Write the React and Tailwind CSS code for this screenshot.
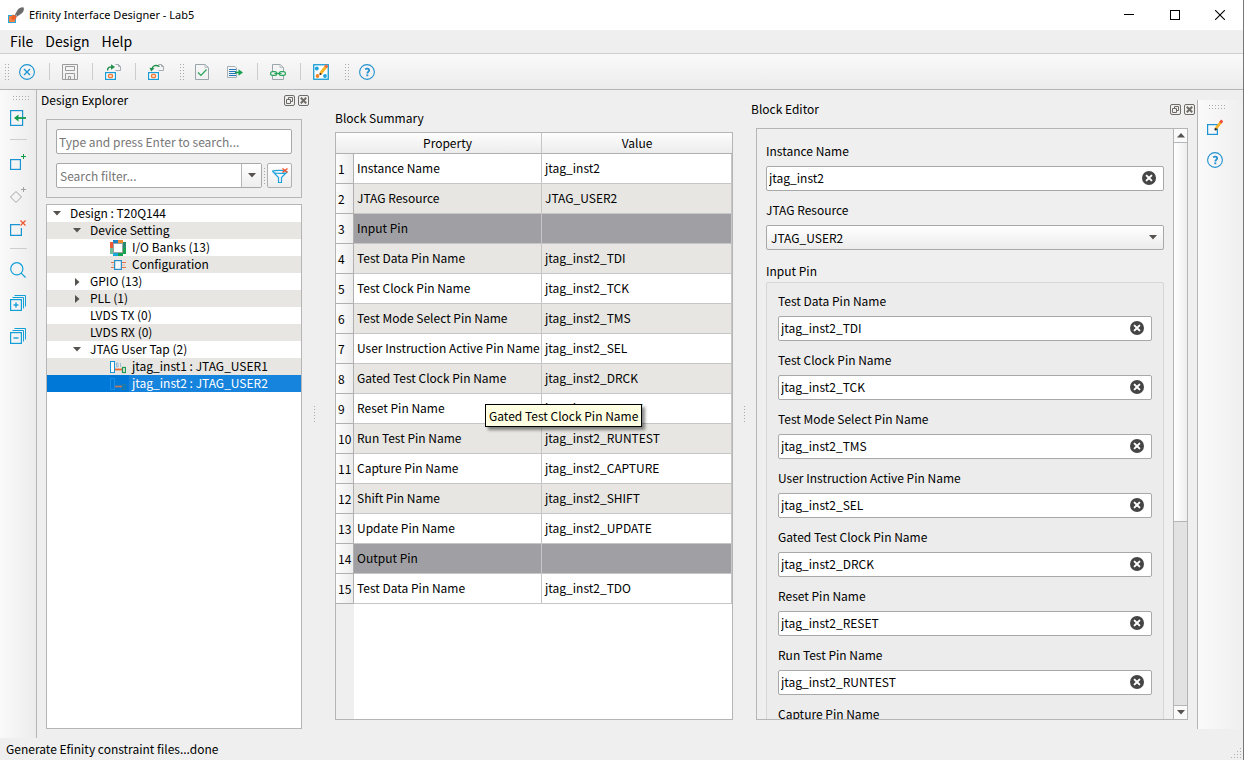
import React from 'react';

const TOOL_BLUE = '#139fd7';

/* ---------- icons ---------- */

function AppLogo() {
  return (
    <svg width="16" height="16" viewBox="0 0 16 16" aria-hidden="true">
      <path d="M5.500 10.500 L9.500 3 C11 0.800 14 0 15.500 0.500 C16.500 2 15.500 5 13.500 6.500 L7 11 Z" fill="#6b6b6b" />
      <path d="M6 9 L9 7.500 L8.500 10.500 L6.500 11.500 Z" fill="#b9c3c8" />
      <rect x="0.500" y="8.500" width="7" height="7" fill="#f58345" stroke="#2aa7dc" strokeWidth="1" />
      <path d="M2.500 10.500 L5 7.500 L8.500 9 L8 12 L5 13.500 Z" fill="#f0622b" />
    </svg>
  );
}

function CloseCircleIcon() {
  return (
    <svg width="16" height="16" viewBox="0 0 16 16" fill="none" stroke="#1a94d2" aria-hidden="true">
      <circle cx="8" cy="8" r="7.400" strokeWidth="1.100" />
      <path d="M5 5 L11 11 M11 5 L5 11" strokeWidth="1.300" />
    </svg>
  );
}

function SaveIcon() {
  return (
    <svg width="16" height="16" viewBox="0 0 16 16" fill="none" stroke="#9b9b9b" aria-hidden="true">
      <path d="M0.500 0.500 H15.500 V15.500 H0.500 Z M3.500 2.500 H12.500 V6.500 H3.500 Z M3.500 15 V9.500 H12.500 V15 M6.500 15 V12.500 H8.500 V15" />
    </svg>
  );
}

function GenerateIcon({ reverse = false }) {
  return (
    <svg width="16" height="16" viewBox="0 0 16 16" fill="none" aria-hidden="true">
      <path d="M10.500 0.500 H13.500 L15.500 2.500 V6.500 H10.500" stroke="#a4acb2" />
      <path d="M13.500 0.500 V2.500 H15.500" stroke="#a4acb2" />
      <rect x="0.600" y="8.600" width="9.800" height="6.800" stroke="#1a9bd6" strokeWidth="1.200" fill="#ffffff" />
      <rect x="3.500" y="10.500" width="4" height="3" rx="1" stroke="#ef7c3b" strokeWidth="1.500" />
      {reverse ? (
        <>
          <path d="M4 5 C4.500 1.500 8 0.500 11.500 2.500" stroke="#1f8f4a" strokeWidth="1.400" />
          <path d="M1.500 3.800 L6.500 4.300 L3.200 7.600 Z" fill="#1f8f4a" />
        </>
      ) : (
        <>
          <path d="M2.500 6.500 C2.500 3.500 4.500 2.500 8 3" stroke="#1f8f4a" strokeWidth="1.400" />
          <path d="M6 0.200 L10 3 L6 5.800 Z" fill="#1f8f4a" />
        </>
      )}
    </svg>
  );
}

function CheckDocIcon() {
  return (
    <svg width="16" height="16" viewBox="0 0 16 16" fill="none" aria-hidden="true">
      <path d="M1.500 0.500 H11 L14.500 3.500 V15.500 H1.500 Z" stroke="#9aa5ab" />
      <path d="M11 0.500 V3.500 H14.500" stroke="#b9c1c5" />
      <path d="M4 8.500 L7 11.500 L12.500 5.500" stroke="#27a55a" strokeWidth="1.200" />
    </svg>
  );
}

function ExportListIcon() {
  return (
    <svg width="16" height="16" viewBox="0 0 16 16" fill="none" aria-hidden="true">
      <path d="M0.500 2.500 H8 L9.500 4 V13.500 H0.500 Z" stroke="#a9b0b5" />
      <path d="M2 5.500 H9 M2 7.500 H9 M2 9.500 H9 M2 11.500 H9" stroke="#2478b8" />
      <path d="M8 8.500 H13" stroke="#18a34e" strokeWidth="1.600" />
      <path d="M11.500 5.300 L16 8.500 L11.500 11.700 Z" fill="#18a34e" />
    </svg>
  );
}

function LinkDocIcon() {
  return (
    <svg width="16" height="16" viewBox="0 0 16 16" fill="none" aria-hidden="true">
      <path d="M2.500 7 V0.500 H10 L13.500 3.500 V7 M2.500 12 V15.500 H13.500 V12" stroke="#9aa5ab" />
      <path d="M10 0.500 V3.500 H13.500" stroke="#b9c1c5" />
      <rect x="0.600" y="7.600" width="6.200" height="3.800" rx="1.900" stroke="#27a55a" strokeWidth="1.200" />
      <rect x="9.200" y="7.600" width="6.200" height="3.800" rx="1.900" stroke="#27a55a" strokeWidth="1.200" />
      <path d="M4.500 9.500 H11.500" stroke="#27a55a" strokeWidth="1.200" />
    </svg>
  );
}

function FloorplanIcon() {
  return (
    <svg width="16" height="16" viewBox="0 0 16 16" fill="none" aria-hidden="true">
      <rect x="0.750" y="0.750" width="14.500" height="14.500" stroke="#159ad3" strokeWidth="1.300" fill="#ffffff" />
      <circle cx="3.800" cy="4.500" r="1.900" fill="#1aa3dc" />
      <circle cx="4.500" cy="12" r="1.900" fill="#f0852b" />
      <circle cx="12" cy="12" r="1.900" fill="#1aa3dc" />
      <path d="M7.500 9.500 L13.500 2" stroke="#fbb324" strokeWidth="3" />
      <path d="M12.500 3.200 L14.200 1.200" stroke="#f06a45" strokeWidth="3" />
      <circle cx="7.400" cy="10" r="1.100" fill="#3b2c1d" />
    </svg>
  );
}

function HelpIcon() {
  return (
    <svg width="16" height="16" viewBox="0 0 16 16" fill="none" stroke="#2291d0" aria-hidden="true">
      <circle cx="8" cy="8" r="7.400" strokeWidth="1.100" />
      <path d="M6.200 5.400 C7.500 4.200 10.200 4.300 10.200 6.200 C10.200 7.700 8.300 7.700 8.300 9.400" strokeWidth="1.800" />
      <path d="M8.300 10.400 V12.200" strokeWidth="1.900" />
    </svg>
  );
}

function ImportBlockIcon() {
  return (
    <svg width="16" height="16" viewBox="0 0 16 16" fill="none" aria-hidden="true">
      <rect x="0.600" y="0.600" width="12" height="14.800" stroke="#1a94d2" strokeWidth="1.200" />
      <path d="M7 8 H16" stroke="#129a4b" strokeWidth="1.800" />
      <path d="M4 8 L8.500 4.600 V11.400 Z" fill="#129a4b" />
    </svg>
  );
}

function AddBlockIcon() {
  return (
    <svg width="16" height="16" viewBox="0 0 16 16" fill="none" aria-hidden="true">
      <rect x="0.600" y="5.600" width="9.800" height="9.800" stroke="#1a94d2" strokeWidth="1.200" />
      <path d="M11 2.500 H16 M13.500 0 V5" stroke="#129a4b" />
    </svg>
  );
}

function AddDiamondIcon() {
  return (
    <svg width="16" height="16" viewBox="0 0 16 16" fill="none" stroke="#a3a3a3" aria-hidden="true">
      <path d="M6 4.500 L11.500 10 L6 15.500 L0.500 10 Z" />
      <path d="M11 2.500 H16 M13.500 0 V5" />
    </svg>
  );
}

function DeleteBlockIcon() {
  return (
    <svg width="16" height="16" viewBox="0 0 16 16" fill="none" aria-hidden="true">
      <path d="M11.400 8 V15.400 H0.600 V4.600 H10" stroke="#1a94d2" strokeWidth="1.200" />
      <path d="M10.500 0.500 L15.500 5.500 M15.500 0.500 L10.500 5.500" stroke="#f0562e" strokeWidth="1.200" />
    </svg>
  );
}

function SearchIcon() {
  return (
    <svg width="16" height="16" viewBox="0 0 16 16" fill="none" stroke={TOOL_BLUE} strokeWidth="1.200" aria-hidden="true">
      <circle cx="6.800" cy="6.800" r="6.100" />
      <path d="M11.200 11.200 L15.500 15.500" />
    </svg>
  );
}

function StackIcon({ plus = false }) {
  return (
    <svg width="16" height="16" viewBox="0 0 16 16" fill="none" stroke={TOOL_BLUE} aria-hidden="true">
      <path d="M4.500 0.500 H15.500 V11.500 M2.500 2.500 H13.500 V13.500" />
      <rect x="0.600" y="4.600" width="10.800" height="10.800" strokeWidth="1.200" />
      <path d="M3.500 10 H8.500" strokeWidth="1.400" />
      {plus && <path d="M6 7.500 V12.500" strokeWidth="1.400" />}
    </svg>
  );
}

function EditBlockIcon() {
  return (
    <svg width="16" height="16" viewBox="0 0 16 16" fill="none" aria-hidden="true">
      <rect x="0.600" y="5.600" width="9.800" height="9.800" stroke="#1a94d2" strokeWidth="1.200" />
      <path d="M9 9.500 L14 3" stroke="#fbb324" strokeWidth="2.800" />
      <path d="M13.300 3.900 L15.200 1.400" stroke="#ee4f3c" strokeWidth="2.800" />
      <circle cx="8.700" cy="10.300" r="1.200" fill="#2d2a26" />
    </svg>
  );
}

function ClearFilterIcon() {
  return (
    <svg width="16" height="16" viewBox="0 0 16 16" fill="none" aria-hidden="true">
      <path d="M0.800 3.500 C0.800 1.800 15 1.800 15 4 C15 6 0.800 6 0.800 3.500 L6.500 9.500 V14.500 H9.500 V9.500 L15 4" stroke="#20a4dc" strokeWidth="1.200" />
      <path d="M10.500 0.500 L15.500 4.500 M15.500 0.500 L10.500 4.500" stroke="#f0562e" strokeWidth="1.400" />
    </svg>
  );
}

function RestoreIcon() {
  return (
    <svg width="11" height="11" viewBox="0 0 11 11" fill="none" stroke="#6f6b66" aria-hidden="true">
      <rect x="0.500" y="0.500" width="10" height="10" rx="1.500" />
      <path d="M4.500 5 V2.500 H8.500 V6.500 H6.500 M2.500 4.500 H6.500 V8.500 H2.500 Z" />
    </svg>
  );
}

function CloseBoxIcon() {
  return (
    <svg width="11" height="11" viewBox="0 0 11 11" fill="none" stroke="#6f6b66" aria-hidden="true">
      <rect x="0.500" y="0.500" width="10" height="10" rx="1.500" />
      <path d="M2.800 2.800 L8.200 8.200 M8.200 2.800 L2.800 8.200" strokeWidth="2" />
    </svg>
  );
}

function ClearTextIcon() {
  return (
    <svg width="14" height="14" viewBox="0 0 14 14" aria-hidden="true">
      <circle cx="7" cy="7" r="7" fill="#454545" />
      <path d="M4.600 4.600 L9.400 9.400 M9.400 4.600 L4.600 9.400" stroke="#ffffff" strokeWidth="2" strokeLinecap="round" />
    </svg>
  );
}

function IoBanksIcon() {
  return (
    <svg width="16" height="16" viewBox="0 0 16 16" aria-hidden="true">
      <path d="M3 0 H8 V3 H3 Z" fill="#1d82c6" />
      <path d="M8 0 H13 V3 H8 Z" fill="#f28a2e" />
      <path d="M0 2 H3 V8 H0 Z" fill="#ee5a35" />
      <path d="M0 8 H3 V14 H0 Z" fill="#6fbf96" />
      <path d="M13 2 H16 V8 H13 Z" fill="#2b8a70" />
      <path d="M13 8 H16 V14 H13 Z" fill="#17a24b" />
      <path d="M3 13 H8 V16 H3 Z" fill="#17a9d9" />
      <path d="M8 13 H13 V16 H8 Z" fill="#15a24f" />
      <rect x="3.500" y="3.500" width="9" height="9" fill="#ffffff" stroke="#9aa0a4" />
    </svg>
  );
}

function ConfigurationIcon() {
  return (
    <svg width="16" height="16" viewBox="0 0 16 16" fill="none" aria-hidden="true">
      <path d="M1 5.500 H4 M12 5.500 H16 M1 10.500 H4 M12 10.500 H16" stroke="#ec6f45" strokeWidth="1.200" />
      <path d="M2 8 H4 M12 8 H15" stroke="#f3b598" />
      <rect x="4.600" y="3.600" width="6.800" height="8.800" stroke="#2d8fc8" strokeWidth="1.200" fill="#f6f9fb" />
    </svg>
  );
}

function JtagIcon({ selected = false }) {
  return (
    <svg width="16" height="16" viewBox="0 0 16 16" fill="none" aria-hidden="true">
      <rect x="0.500" y="2.500" width="4" height="11" stroke={selected ? '#1b8be0' : '#1a94d2'} fill={selected ? 'none' : '#ffffff'} />
      {!selected && <path d="M6.500 4 V8 H8 V4 Z M10.500 4 V8" stroke="#8fb9d4" strokeWidth="0.900" />}
      <path d="M5 10.500 H12" stroke={selected ? '#b87a5c' : '#ee6a35'} strokeWidth="1.800" />
      <rect x="12.500" y="8.500" width="3" height="5" stroke={selected ? '#1f7ba0' : '#1f9a54'} strokeWidth="1.200" />
    </svg>
  );
}

function Arrow({ dir = 'down', className = '' }) {
  const d = { down: 'M0 0 H8 L4 4.500 Z', up: 'M0 4.500 H8 L4 0 Z' }[dir];
  return (
    <svg width="8" height="5" viewBox="0 0 8 5" className={className} aria-hidden="true">
      <path d={d} fill="#55524f" />
    </svg>
  );
}

/* ---------- window chrome ---------- */

function TitleBar() {
  return (
    <header className="flex h-[30px] shrink-0 items-center bg-white pl-2">
      <AppLogo />
      <h1 className="ml-[5px] flex-1 font-['Noto_Sans',sans-serif] text-[11px]">Efinity Interface Designer - Lab5</h1>
      <button aria-label="Minimize" className="flex h-full w-[46px] items-center justify-center">
        <svg width="10" height="10" viewBox="0 0 10 10"><path d="M0 4.500 H10" stroke="#000" /></svg>
      </button>
      <button aria-label="Maximize" className="flex h-full w-[45px] items-center justify-center">
        <svg width="10" height="10" viewBox="0 0 10 10"><rect x="0.500" y="0.500" width="9" height="9" fill="none" stroke="#000" /></svg>
      </button>
      <button aria-label="Close" className="flex h-full w-[46px] items-center justify-center">
        <svg width="10" height="10" viewBox="0 0 10 10"><path d="M0 0 L10 10 M10 0 L0 10" stroke="#000" strokeWidth="1.100" /></svg>
      </button>
    </header>
  );
}

function MenuBar() {
  return (
    <nav className="flex h-6 shrink-0 items-center gap-3 border-b border-[#cfcfcf] pb-px pl-[10px] text-sm">
      <button>File</button>
      <button>Design</button>
      <button>Help</button>
    </nav>
  );
}

const dots = 'bg-[radial-gradient(circle,#a9a9a9_35%,transparent_45%)] bg-[length:3px_3px]';

function VerticalGrip({ className }) {
  return (
    <div className={className}>
      <div className={`h-[18px] w-[6px] ${dots}`} />
    </div>
  );
}

function TopButton({ label, children }) {
  return (
    <button aria-label={label} className="flex h-full w-[33px] items-center pl-[9px]">
      {children}
    </button>
  );
}

function TopSeparator() {
  return <div className="ml-[6px] mr-[3px] h-[17px] w-px bg-[#cdcdcd]" />;
}

function TopToolbar() {
  return (
    <div role="toolbar" className="flex h-9 shrink-0 items-center border-b border-[#b5b5b5] bg-linear-to-b from-[#fafafa] to-[#ececec]">
      <VerticalGrip className="w-[10px] pl-1" />
      <TopButton label="Close design"><CloseCircleIcon /></TopButton>
      <TopSeparator />
      <TopButton label="Save"><SaveIcon /></TopButton>
      <TopSeparator />
      <TopButton label="Import design"><GenerateIcon /></TopButton>
      <TopSeparator />
      <TopButton label="Export design"><GenerateIcon reverse /></TopButton>
      <VerticalGrip className="w-[13px] pl-[7px]" />
      <TopButton label="Check design"><CheckDocIcon /></TopButton>
      <TopButton label="Generate constraints"><ExportListIcon /></TopButton>
      <TopSeparator />
      <TopButton label="View report"><LinkDocIcon /></TopButton>
      <TopSeparator />
      <TopButton label="Resource assigner"><FloorplanIcon /></TopButton>
      <VerticalGrip className="w-[13px] pl-[7px]" />
      <TopButton label="Help"><HelpIcon /></TopButton>
    </div>
  );
}

function SideButton({ label, children }) {
  return (
    <button aria-label={label} className="flex h-[33px] items-center">
      {children}
    </button>
  );
}

function LeftToolbar() {
  return (
    <div role="toolbar" className="flex w-[37px] shrink-0 flex-col border-r border-[#b5b5b5] bg-linear-to-r from-[#fafafa] to-[#ececec] pl-[10px]">
      <div className={`ml-[2px] mt-[5px] h-[6px] w-[18px] shrink-0 ${dots}`} />
      <SideButton label="Import block"><ImportBlockIcon /></SideButton>
      <div className="my-[5px] h-px w-[17px] bg-[#cdcdcd]" />
      <SideButton label="Add block"><AddBlockIcon /></SideButton>
      <SideButton label="Add instance"><AddDiamondIcon /></SideButton>
      <SideButton label="Delete block"><DeleteBlockIcon /></SideButton>
      <div className="my-[4px] h-px w-[17px] bg-[#cdcdcd]" />
      <SideButton label="Find"><SearchIcon /></SideButton>
      <SideButton label="Expand all"><StackIcon plus /></SideButton>
      <SideButton label="Collapse all"><StackIcon /></SideButton>
    </div>
  );
}

function RightToolbar() {
  return (
    <div role="toolbar" className="mb-[9px] mt-[10px] flex w-[46px] shrink-0 flex-col border-l border-[#b5b5b5] bg-linear-to-r from-[#fafafa] to-[#efefef] pl-[9px]">
      <div className={`ml-[1px] mt-[4px] h-[6px] w-[18px] shrink-0 ${dots}`} />
      <SideButton label="Edit block"><EditBlockIcon /></SideButton>
      <SideButton label="Help"><HelpIcon /></SideButton>
    </div>
  );
}

function DockHeader({ title }) {
  return (
    <div className="flex h-5 shrink-0 items-center gap-[3px]">
      <h2 className="flex-1">{title}</h2>
      <button aria-label={`Float ${title}`}><RestoreIcon /></button>
      <button aria-label={`Close ${title}`}><CloseBoxIcon /></button>
    </div>
  );
}

function Splitter() {
  return (
    <div className="flex w-[11px] shrink-0 items-center justify-center">
      <div className={`h-[18px] w-[3px] ${dots}`} />
    </div>
  );
}

/* ---------- design explorer ---------- */

const TREE = [
  { level: 0, label: 'Design : T20Q144', open: true },
  { level: 1, label: 'Device Setting', open: true },
  { level: 2, label: 'I/O Banks (13)', icon: <IoBanksIcon /> },
  { level: 2, label: 'Configuration', icon: <ConfigurationIcon /> },
  { level: 1, label: 'GPIO (13)', open: false },
  { level: 1, label: 'PLL (1)', open: false },
  { level: 1, label: 'LVDS TX (0)' },
  { level: 1, label: 'LVDS RX (0)' },
  { level: 1, label: 'JTAG User Tap (2)', open: true },
  { level: 2, label: 'jtag_inst1 : JTAG_USER1', icon: <JtagIcon /> },
  { level: 2, label: 'jtag_inst2 : JTAG_USER2', icon: <JtagIcon selected />, selected: true },
];

const INDENT = ['pl-[6px]', 'pl-[26px]', 'pl-[46px]'];

function TreeRow({ item, index }) {
  const bg = item.selected ? 'bg-[#0078d7] text-white' : index % 2 ? 'bg-[#e7e6e2]' : 'bg-white';
  return (
    <li
      role="treeitem"
      aria-level={item.level + 1}
      aria-expanded={item.open}
      aria-selected={!!item.selected}
      className={`flex h-[17px] items-center ${INDENT[item.level]} ${bg}`}
    >
      <span className="flex w-[17px] shrink-0">
        {item.open === true && <Arrow />}
        {item.open === false && (
          <svg width="5" height="8" viewBox="0 0 5 8" className="ml-[2px]" aria-hidden="true">
            <path d="M0 0 V8 L4.500 4 Z" fill="#55524f" />
          </svg>
        )}
      </span>
      {item.icon && <span className="mr-[3px] shrink-0">{item.icon}</span>}
      <span
        className={`flex h-full flex-1 items-center whitespace-nowrap pb-[2px] ${item.icon ? 'pl-[3px]' : ''} ${item.selected ? 'bg-[#1683dd]' : ''}`}
      >
        {item.label}
      </span>
    </li>
  );
}

function DesignExplorer() {
  return (
    <section className="flex w-[272px] shrink-0 flex-col pb-[9px] pl-1">
      <DockHeader title="Design Explorer" />
      <div className="ml-[5px] mr-[7px] mt-[9px] flex flex-col gap-[9px] border border-[#b5b5b5] p-[9px]">
        <input
          type="text"
          aria-label="Search"
          placeholder="Type and press Enter to search..."
          className="h-[25px] w-full rounded-[2px] border border-[#a8a8a8] bg-white px-[2px] outline-none placeholder:text-[#777777]"
        />
        <div className="flex items-center">
          <div className="flex h-[25px] min-w-0 flex-1 rounded-[2px] border border-[#a8a8a8] bg-white">
            <input
              type="text"
              aria-label="Search filter"
              placeholder="Search filter..."
              className="min-w-0 flex-1 bg-transparent px-[3px] outline-none placeholder:text-[#777777]"
            />
            <button aria-label="Show filters" className="flex w-5 items-center justify-center border-l border-[#b5b5b5] bg-linear-to-b from-white to-[#eeeeee]">
              <Arrow />
            </button>
          </div>
          <div className={`mx-px h-[18px] w-[3px] ${dots}`} />
          <button aria-label="Clear filter" className="flex size-[25px] items-center justify-center rounded-[2px] border border-[#b0b0b0] bg-linear-to-b from-white to-[#eeeeee]">
            <ClearFilterIcon />
          </button>
        </div>
      </div>
      <ul role="tree" aria-label="Design" className="ml-[5px] mr-[7px] mt-[6px] min-h-0 flex-1 overflow-hidden border border-[#b5b5b5] bg-white">
        {TREE.map((item, i) => (
          <TreeRow key={item.label} item={item} index={i} />
        ))}
      </ul>
    </section>
  );
}

/* ---------- block summary ---------- */

const ROWS = [
  ['Instance Name', 'jtag_inst2'],
  ['JTAG Resource', 'JTAG_USER2'],
  ['Input Pin'],
  ['Test Data Pin Name', 'jtag_inst2_TDI'],
  ['Test Clock Pin Name', 'jtag_inst2_TCK'],
  ['Test Mode Select Pin Name', 'jtag_inst2_TMS'],
  ['User Instruction Active Pin Name', 'jtag_inst2_SEL'],
  ['Gated Test Clock Pin Name', 'jtag_inst2_DRCK', true],
  ['Reset Pin Name', 'jtag_inst2_RESET'],
  ['Run Test Pin Name', 'jtag_inst2_RUNTEST'],
  ['Capture Pin Name', 'jtag_inst2_CAPTURE'],
  ['Shift Pin Name', 'jtag_inst2_SHIFT'],
  ['Update Pin Name', 'jtag_inst2_UPDATE'],
  ['Output Pin'],
  ['Test Data Pin Name', 'jtag_inst2_TDO'],
];

function BlockSummary() {
  const cell = 'border-b border-r border-[#c6c6c6] px-[3px] pb-[2px] text-left font-normal';
  const head = 'border-b border-[#b0b0b0] bg-linear-to-b from-[#fdfdfd] to-[#ececec] font-normal';
  return (
    <section className="flex min-w-0 flex-1 flex-col pb-[18px] pl-[15px] pr-[6px]">
      <h2 className="mt-[18px] h-[24px] leading-[19px]">Block Summary</h2>
      <div className="flex min-h-0 flex-1 flex-col border border-[#b5b5b5] bg-white">
        <table className="w-full table-fixed border-separate border-spacing-0 whitespace-nowrap">
          <colgroup>
            <col className="w-[18px]" />
            <col className="w-[188px]" />
            <col />
          </colgroup>
          <thead>
            <tr className="h-[21px]">
              <td className={head} />
              <th className={`${head} border-r border-r-[#c6c6c6]`}>Property</th>
              <th className={head}>Value</th>
            </tr>
          </thead>
          <tbody>
            {ROWS.map(([name, value, hovered], i) => {
              const bg = !value ? 'bg-[#a0a0a4]' : i % 2 ? 'bg-[#e7e6e2]' : 'bg-white';
              return (
                <tr key={i} className="h-[30px]">
                  <th scope="row" className="border-b border-r border-[#b0b0b0] bg-linear-to-r from-[#fdfdfd] to-[#ececec] p-0 pl-[2px] text-left font-normal">
                    {i + 1}
                  </th>
                  <td className={`${cell} ${bg} ${hovered ? 'relative' : ''}`}>
                    {name}
                    {hovered && (
                      <div role="tooltip" className="absolute left-[131px] top-[40px] z-10 border border-black bg-[#ffffe1] px-[3px] leading-[21px] shadow-[3px_3px_3px_rgba(0,0,0,0.45)]">
                        {name}
                      </div>
                    )}
                  </td>
                  <td className={`${cell} ${bg}`}>{value}</td>
                </tr>
              );
            })}
          </tbody>
        </table>
        <div className="w-[18px] flex-1 bg-[#efefef]" />
      </div>
    </section>
  );
}

/* ---------- block editor ---------- */

const PINS = [
  ['Test Data Pin Name', 'jtag_inst2_TDI'],
  ['Test Clock Pin Name', 'jtag_inst2_TCK'],
  ['Test Mode Select Pin Name', 'jtag_inst2_TMS'],
  ['User Instruction Active Pin Name', 'jtag_inst2_SEL'],
  ['Gated Test Clock Pin Name', 'jtag_inst2_DRCK'],
  ['Reset Pin Name', 'jtag_inst2_RESET'],
  ['Run Test Pin Name', 'jtag_inst2_RUNTEST'],
  ['Capture Pin Name', 'jtag_inst2_CAPTURE'],
];

function TextField({ id, label, value }) {
  return (
    <div className="mb-[10px] flex flex-col gap-[6px]">
      <label htmlFor={id} className="leading-[18px]">{label}</label>
      <div className="flex h-[25px] items-center rounded-[2px] border border-[#a8a8a8] bg-white pb-px pr-[7px]">
        <input id={id} type="text" defaultValue={value} className="min-w-0 flex-1 bg-transparent px-[2px] outline-none" />
        <button aria-label={`Clear ${label}`}><ClearTextIcon /></button>
      </div>
    </div>
  );
}

function BlockEditor() {
  return (
    <section className="flex w-[447px] shrink-0 flex-col pb-[18px] pl-px pr-[2px] pt-[9px]">
      <DockHeader title="Block Editor" />
      <div className="ml-[5px] mr-[7px] mt-[9px] flex min-h-0 flex-1 border border-[#b5b5b5]">
        <div className="min-w-0 flex-1 overflow-hidden px-[9px] pt-[13px]">
          <TextField id="instance-name" label="Instance Name" value="jtag_inst2" />
          <div className="mb-[12px] flex flex-col gap-[6px]">
            <label htmlFor="resource" className="leading-[18px]">JTAG Resource</label>
            <div className="grid items-center">
              <select
                id="resource"
                defaultValue="JTAG_USER2"
                className="col-start-1 row-start-1 h-[25px] w-full appearance-none rounded-[2px] border border-[#a8a8a8] bg-linear-to-b from-white to-[#ececec] px-1 outline-none"
              >
                <option>JTAG_USER1</option>
                <option>JTAG_USER2</option>
              </select>
              <Arrow className="pointer-events-none col-start-1 row-start-1 mr-[7px] justify-self-end" />
            </div>
          </div>
          <fieldset>
            <legend className="mb-[2px] leading-[18px]">Input Pin</legend>
            <div className="rounded-[2px] border border-[#d6d6d6] bg-[#ececec] px-[11px] pt-[9px]">
              {PINS.map(([label, value], i) => (
                <TextField key={label} id={`pin-${i}`} label={label} value={value} />
              ))}
            </div>
          </fieldset>
        </div>
        <div className="flex w-[14px] shrink-0 flex-col border-l border-[#b5b5b5] bg-[#e2e2e2]">
          <button aria-label="Scroll up" className="flex h-[14px] items-center justify-center border-b border-[#b5b5b5] bg-[#fafafa]"><Arrow dir="up" /></button>
          <div className="h-[379px] border-b border-[#b5b5b5] bg-linear-to-r from-white to-[#eeeeee]" />
          <div className="flex-1" />
          <button aria-label="Scroll down" className="flex h-[14px] items-center justify-center border-t border-[#b5b5b5] bg-[#fafafa]"><Arrow /></button>
        </div>
      </div>
    </section>
  );
}

function StatusBar() {
  return (
    <footer className="flex h-[22px] shrink-0 items-center justify-between pl-[6px]">
      <span>Generate Efinity constraint files...done</span>
      <svg width="12" height="12" viewBox="0 0 12 12" fill="#b0b0b0" className="self-end" aria-hidden="true">
        <path d="M9 0h1v1h-1z M9 3h1v1h-1z M6 3h1v1h-1z M9 6h1v1h-1z M6 6h1v1h-1z M3 6h1v1h-1z M9 9h1v1h-1z M6 9h1v1h-1z M3 9h1v1h-1z M0 9h1v1h-1z" />
      </svg>
    </footer>
  );
}

export default function App() {
  return (
    <div className="flex h-screen flex-col overflow-hidden border-r border-[#777777] bg-[#efefef] font-['Noto_Sans_CJK_SC','Noto_Sans',sans-serif] text-xs text-black">
      <TitleBar />
      <MenuBar />
      <TopToolbar />
      <main className="flex min-h-0 flex-1">
        <LeftToolbar />
        <DesignExplorer />
        <Splitter />
        <BlockSummary />
        <Splitter />
        <BlockEditor />
        <RightToolbar />
      </main>
      <StatusBar />
    </div>
  );
}
